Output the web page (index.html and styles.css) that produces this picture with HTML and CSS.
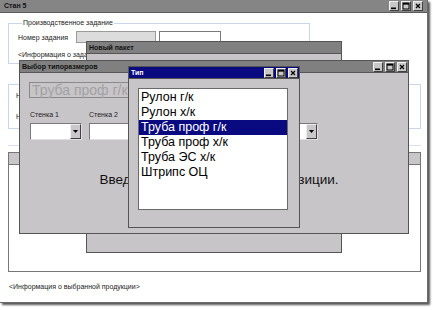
FILE: index.html
```html
<!DOCTYPE html>
<html>
<head>
<meta charset="utf-8">
<link rel="stylesheet" href="styles.css">
</head>
<body>
<div class="desktop">

  <!-- главное окно -->
  <div class="main-window">
    <div class="titlebar">
      <span class="title">Стан 5</span>
      <div class="title-buttons">
        <span class="tbtn"><svg width="8" height="8" viewBox="0 0 8 8"><rect x="1" y="5.5" width="5" height="1.6" fill="#000"/></svg></span>
        <span class="tbtn"><svg width="8" height="8" viewBox="0 0 8 8"><rect x="1" y="1" width="6" height="6" fill="none" stroke="#000" stroke-width="1"/><rect x="1" y="1" width="6" height="1.6" fill="#000"/></svg></span>
        <span class="tbtn"><svg width="8" height="8" viewBox="0 0 8 8"><path d="M2 2 L6 6 M6 2 L2 6" stroke="#000" stroke-width="1.2"/></svg></span>
      </div>
    </div>
    <div class="client">
      <fieldset class="group group-task">
        <legend>Производственное задание</legend>
        <div class="task-row">
          <span class="task-label">Номер задания</span>
          <span class="field field-gray"></span>
          <span class="field field-short"></span>
        </div>
        <div class="info">&lt;Информация о задании&gt;</div>
      </fieldset>
      <fieldset class="group group-mode">
        <legend>Режим</legend>
        <div class="mode-row">Н</div>
        <div class="mode-row mode-row-2">Н</div>
      </fieldset>
      <div class="divider"></div>
      <div class="grid">
        <div class="grid-head"></div>
      </div>
      <div class="info info-bottom">&lt;Информация о выбранной продукции&gt;</div>
    </div>
  </div>

  <!-- окно "Новый пакет" -->
  <div class="window win-packet">
    <div class="win-title"><span class="title">Новый пакет</span></div>
  </div>

  <!-- окно "Выбор типоразмеров" -->
  <div class="window win-sizes">
    <div class="win-title">
      <span class="title">Выбор типоразмеров</span>
      <div class="title-buttons">
        <span class="tbtn"><svg width="8" height="8" viewBox="0 0 8 8"><rect x="1" y="5.5" width="5" height="1.6" fill="#000"/></svg></span>
        <span class="tbtn"><svg width="8" height="8" viewBox="0 0 8 8"><rect x="1" y="1" width="6" height="6" fill="none" stroke="#000" stroke-width="1"/><rect x="1" y="1" width="6" height="1.6" fill="#000"/></svg></span>
        <span class="tbtn"><svg width="8" height="8" viewBox="0 0 8 8"><path d="M2 2 L6 6 M6 2 L2 6" stroke="#000" stroke-width="1.2"/></svg></span>
      </div>
    </div>
    <div class="sizes-body">
      <div class="type-box">Труба проф г/к</div>
      <div class="combos">
        <div class="combo-col">
          <span class="combo-label">Стенка 1</span>
          <div class="combo"><span class="combo-btn"><svg width="5" height="3" viewBox="0 0 5 3"><path d="M0 0 H5 L2.5 3 Z" fill="#000"/></svg></span></div>
        </div>
        <div class="combo-col">
          <span class="combo-label">Стенка 2</span>
          <div class="combo"><span class="combo-btn"><svg width="5" height="3" viewBox="0 0 5 3"><path d="M0 0 H5 L2.5 3 Z" fill="#000"/></svg></span></div>
        </div>
        <div class="combo-col">
          <span class="combo-label"></span>
          <div class="combo"><span class="combo-btn"><svg width="5" height="3" viewBox="0 0 5 3"><path d="M0 0 H5 L2.5 3 Z" fill="#000"/></svg></span></div>
        </div>
        <div class="combo-col">
          <span class="combo-label"></span>
          <div class="combo"><span class="combo-btn"><svg width="5" height="3" viewBox="0 0 5 3"><path d="M0 0 H5 L2.5 3 Z" fill="#000"/></svg></span></div>
        </div>
        <div class="combo-col">
          <span class="combo-label"></span>
          <div class="combo"><span class="combo-btn"><svg width="5" height="3" viewBox="0 0 5 3"><path d="M0 0 H5 L2.5 3 Z" fill="#000"/></svg></span></div>
        </div>
      </div>
      <div class="hint">Введите типоразмеры новой позиции.</div>
    </div>
  </div>

  <!-- окно "Тип" -->
  <div class="window win-type">
    <div class="win-title win-title-active">
      <span class="title">Тип</span>
      <div class="title-buttons">
        <span class="tbtn"><svg width="8" height="8" viewBox="0 0 8 8"><rect x="1" y="5.5" width="5" height="1.6" fill="#000"/></svg></span>
        <span class="tbtn"><svg width="8" height="8" viewBox="0 0 8 8"><rect x="1" y="1" width="6" height="6" fill="none" stroke="#000" stroke-width="1"/><rect x="1" y="1" width="6" height="1.6" fill="#000"/></svg></span>
        <span class="tbtn"><svg width="8" height="8" viewBox="0 0 8 8"><path d="M2 2 L6 6 M6 2 L2 6" stroke="#000" stroke-width="1.2"/></svg></span>
      </div>
    </div>
    <ul class="type-list">
      <li>Рулон г/к</li>
      <li>Рулон х/к</li>
      <li class="selected">Труба проф г/к</li>
      <li>Труба проф х/к</li>
      <li>Труба ЭС х/к</li>
      <li>Штрипс ОЦ</li>
    </ul>
  </div>

</div>
</body>
</html>
```

FILE: styles.css
```css
body {
	margin: 0;
	background: #fff;
	font-family: "Liberation Sans", Arial, sans-serif;
	font-size: 7px;
	color: #222;
}

.desktop {
	position: relative;
	width: 433px;
	height: 310px;
	overflow: hidden;
}

/* главное окно */
.main-window {
	width: 428px;
	height: 303px;
	box-sizing: border-box;
	background: #fff;
	border-right: 1px solid #6a6a6a;
	border-bottom: 1px solid #6a6a6a;
	box-shadow: 2px 2px 2px #555;
	display: flex;
	flex-direction: column;
}

.titlebar {
	height: 13px;
	flex-shrink: 0;
	box-sizing: border-box;
	background: #858585;
	border-bottom: 1px solid #5c5c5c;
	display: flex;
	align-items: center;
	justify-content: space-between;
	padding: 0 4px 0 4px;
}

.title {
	font-weight: bold;
	font-size: 7px;
	color: #111;
	line-height: 8px;
}

.title-buttons {
	display: flex;
	gap: 2px;
}

.tbtn {
	width: 10px;
	height: 10px;
	box-sizing: border-box;
	background: #c9c7c9;
	border: 1px solid;
	border-color: #f0f0f0 #404040 #404040 #f0f0f0;
	display: flex;
	align-items: center;
	justify-content: center;
}

.tbtn svg {
	display: block;
}

.client {
	padding: 6px 7px 0 8px;
	display: flex;
	flex-direction: column;
}

.group {
	margin: 0;
	padding: 0;
	border: 1px solid #c9d7e8;
	box-sizing: border-box;
}

.group legend {
	font-size: 7px;
	line-height: 8px;
	padding: 0 1px;
	margin-left: 4px;
}

.group-task {
	width: 302px;
	padding: 4px 9px 4px 9px;
}

.task-row {
	display: flex;
	align-items: center;
	height: 12px;
}

.task-label {
	width: 58px;
}

.field {
	height: 12px;
	width: 80px;
	box-sizing: border-box;
	border: 1px solid #7a7a7a;
	background: #fff;
	margin-right: 3px;
}

.field-gray {
	background: #dcdcdc;
	border-color: #9a9a9a;
}

.field-short {
	width: 62px;
}

.info {
	line-height: 8px;
	margin-top: 8px;
}

.group-mode {
	width: 413px;
	margin-top: 16px;
	height: 49px;
	padding: 4px 7px;
}

.mode-row {
	line-height: 8px;
}

.mode-row-2 {
	margin-top: 13px;
}

.divider {
	width: 413px;
	height: 1px;
	background: #d8e2ee;
	margin-top: 16px;
}

.grid {
	width: 413px;
	height: 120px;
	margin-top: 6px;
	box-sizing: border-box;
	border: 1px solid #777;
	background: #fff;
}

.grid-head {
	height: 11px;
	background: #c9c6ca;
	border-bottom: 1px solid #777;
}

.info-bottom {
	margin-top: 11px;
	margin-left: 1px;
}

/* дочерние окна */
.window {
	position: absolute;
	box-sizing: border-box;
	background: #c8c5c9;
	border: 1px solid #555;
	display: flex;
	flex-direction: column;
}

.win-title {
	height: 12px;
	flex-shrink: 0;
	box-sizing: border-box;
	background: #808080;
	border-bottom: 1px solid #555;
	display: flex;
	align-items: center;
	justify-content: space-between;
	padding: 0 1px 0 2px;
}

.win-title-active {
	background: #0a0a80;
}

.win-title-active .title {
	color: #fff;
}

.win-packet {
	left: 86px;
	top: 41px;
	width: 256px;
	height: 212px;
}

.win-sizes {
	left: 19px;
	top: 60px;
	width: 390px;
	height: 174px;
}

.win-type {
	left: 128px;
	top: 66px;
	width: 172px;
	height: 162px;
}

.sizes-body {
	padding: 9px 0 0 9px;
	display: flex;
	flex-direction: column;
}

.type-box {
	width: 180px;
	height: 16px;
	box-sizing: border-box;
	border: 1px solid #8a8a8a;
	font-size: 14px;
	line-height: 14px;
	color: #a2a2a2;
	padding-left: 2px;
}

.combos {
	display: flex;
	gap: 7px;
	margin-top: 13px;
	padding-left: 1px;
}

.combo-col {
	display: flex;
	flex-direction: column;
	gap: 4px;
}

.combo-label {
	line-height: 8px;
	height: 8px;
}

.combo {
	width: 52px;
	height: 17px;
	box-sizing: border-box;
	background: #fff;
	border: 1px solid;
	border-color: #7a7a7a #e0e0e0 #e0e0e0 #7a7a7a;
	display: flex;
	justify-content: flex-end;
}

.combo-btn {
	width: 11px;
	box-sizing: border-box;
	background: #c9c7c9;
	border: 1px solid;
	border-color: #eee #404040 #404040 #eee;
	display: flex;
	align-items: center;
	justify-content: center;
}

.hint {
	margin-top: 32px;
	font-size: 13.5px;
	line-height: 16px;
	color: #111;
	text-align: center;
	padding-left: 1px;
}

.type-list {
	list-style: none;
	margin: 9px 0 0 9px;
	padding: 1px 0 0 0;
	width: 150px;
	height: 122px;
	box-sizing: border-box;
	background: #fff;
	border: 1px solid #6a6a6a;
	font-size: 12.5px;
	line-height: 15px;
	color: #000;
}

.type-list li {
	padding-left: 2px;
}

.type-list .selected {
	background: #0a0a80;
	color: #fff;
}
```
